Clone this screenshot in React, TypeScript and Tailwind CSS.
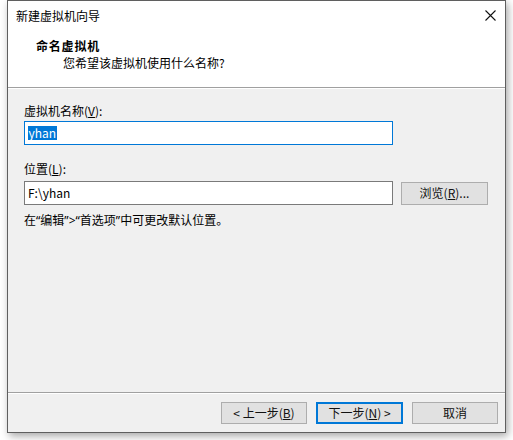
import React from 'react';

// Windows-style wizard dialog: "新建虚拟机向导"

const Btn = ({
  children,
  primary = false,
  className = '',
}: {
  children: React.ReactNode;
  primary?: boolean;
  className?: string;
}) => (
  <button
    className={`flex items-center justify-center bg-[#e1e1e1] text-[12px] leading-[16px] text-[#111] ${
      primary ? 'border-2 border-[#0078d7]' : 'border border-[#adadad]'
    } ${className}`}
  >
    {children}
  </button>
);

const Q = ({ children }: { children: React.ReactNode }) => (
  <span className="font-['Noto_Sans',sans-serif]">{children}</span>
);

export default function App() {
  return (
    <div className="w-[513px] h-[440px] bg-white font-['Noto_Sans_CJK_SC','Noto_Sans',sans-serif] text-[12px] leading-[16px] text-black overflow-hidden">
      <div className="ml-[7px] w-[499px] h-[433px] border border-[#5f5f5f] bg-[#f0f0f0] flex flex-col shadow-[2px_3px_8px_rgba(0,0,0,0.35)]">
        {/* title bar + header */}
        <div className="bg-white h-[86px] flex flex-col">
          <div className="h-[29px] flex items-center justify-between pl-[8px] pr-[9px]">
            <span>新建虚拟机向导</span>
            <svg width="11" height="11" viewBox="0 0 11 11">
              <path d="M0.5 0.5 L10.5 10.5 M10.5 0.5 L0.5 10.5" stroke="#111" strokeWidth="1.1" fill="none" />
            </svg>
          </div>
          <div className="pl-[28px] mt-[8px] font-bold tracking-[0.8px]">命名虚拟机</div>
          <div className="pl-[55px] mt-[1px]">您希望该虚拟机使用什么名称?</div>
        </div>
        <div className="h-[2px] border-t border-[#a0a0a0] border-b border-b-white" />

        {/* body */}
        <div className="flex-1 flex flex-col pl-[16px] pt-[14px]">
          <div>
            虚拟机名称(<span className="underline">V</span>):
          </div>
          <div className="mt-[2px] w-[369px] h-[24px] border border-[#0078d7] bg-white flex items-center pl-[3px]">
            <span className="bg-[#0078d7] text-white leading-[14px] px-[0.5px]">yhan</span>
          </div>

          <div className="mt-[16px]">
            位置(<span className="underline">L</span>):
          </div>
          <div className="mt-[4px] flex items-center">
            <div className="w-[369px] h-[24px] border border-[#7a7a7a] bg-white flex items-center pl-[3px]">
              F:\yhan
            </div>
            <Btn className="ml-[8px] w-[87px] h-[23px]">
              浏览(<span className="underline">R</span>)...
            </Btn>
          </div>

          <div className="mt-[7px]">
            在<Q>“</Q>编辑<Q>”&gt;“</Q>首选项<Q>”</Q>中可更改默认位置。
          </div>
        </div>

        <div className="h-[2px] border-t border-[#a0a0a0] border-b border-b-white" />

        {/* footer */}
        <div className="h-[38px] flex justify-end items-start gap-[9px] pt-[8px] pr-[7px]">
          <Btn className="w-[86px] h-[22px]">
            &lt; 上一步(<span className="underline">B</span>)
          </Btn>
          <Btn primary className="w-[87px] h-[22px]">
            下一步(<span className="underline">N</span>) &gt;
          </Btn>
          <Btn className="w-[86px] h-[22px]">取消</Btn>
        </div>
      </div>
    </div>
  );
}
